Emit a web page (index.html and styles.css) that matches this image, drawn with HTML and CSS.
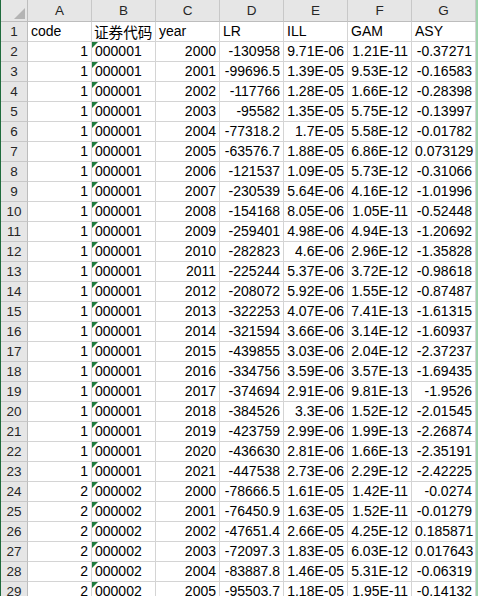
FILE: index.html
```html
<!DOCTYPE html>
<html>
<head>
<meta charset="utf-8">
<link rel="stylesheet" href="styles.css">
</head>
<body>
<div class="sheet">
  <div class="row head">
    <div class="rh corner"><span class="tri"></span></div>
    <div class="ch">A</div><div class="ch">B</div><div class="ch">C</div><div class="ch">D</div><div class="ch">E</div><div class="ch">F</div><div class="ch">G</div>
  </div>
  <div class="row"><div class="rh">1</div><div class="c">code</div><div class="c cjk">证券代码</div><div class="c">year</div><div class="c">LR</div><div class="c">ILL</div><div class="c">GAM</div><div class="c">ASY</div></div>
  <div class="row"><div class="rh">2</div><div class="c n">1</div><div class="c t">000001</div><div class="c n">2000</div><div class="c n">-130958</div><div class="c n">9.71E-06</div><div class="c n">1.21E-11</div><div class="c n">-0.37271</div></div>
  <div class="row"><div class="rh">3</div><div class="c n">1</div><div class="c t">000001</div><div class="c n">2001</div><div class="c n">-99696.5</div><div class="c n">1.39E-05</div><div class="c n">9.53E-12</div><div class="c n">-0.16583</div></div>
  <div class="row"><div class="rh">4</div><div class="c n">1</div><div class="c t">000001</div><div class="c n">2002</div><div class="c n">-117766</div><div class="c n">1.28E-05</div><div class="c n">1.66E-12</div><div class="c n">-0.28398</div></div>
  <div class="row"><div class="rh">5</div><div class="c n">1</div><div class="c t">000001</div><div class="c n">2003</div><div class="c n">-95582</div><div class="c n">1.35E-05</div><div class="c n">5.75E-12</div><div class="c n">-0.13997</div></div>
  <div class="row"><div class="rh">6</div><div class="c n">1</div><div class="c t">000001</div><div class="c n">2004</div><div class="c n">-77318.2</div><div class="c n">1.7E-05</div><div class="c n">5.58E-12</div><div class="c n">-0.01782</div></div>
  <div class="row"><div class="rh">7</div><div class="c n">1</div><div class="c t">000001</div><div class="c n">2005</div><div class="c n">-63576.7</div><div class="c n">1.88E-05</div><div class="c n">6.86E-12</div><div class="c n">0.073129</div></div>
  <div class="row"><div class="rh">8</div><div class="c n">1</div><div class="c t">000001</div><div class="c n">2006</div><div class="c n">-121537</div><div class="c n">1.09E-05</div><div class="c n">5.73E-12</div><div class="c n">-0.31066</div></div>
  <div class="row"><div class="rh">9</div><div class="c n">1</div><div class="c t">000001</div><div class="c n">2007</div><div class="c n">-230539</div><div class="c n">5.64E-06</div><div class="c n">4.16E-12</div><div class="c n">-1.01996</div></div>
  <div class="row"><div class="rh">10</div><div class="c n">1</div><div class="c t">000001</div><div class="c n">2008</div><div class="c n">-154168</div><div class="c n">8.05E-06</div><div class="c n">1.05E-11</div><div class="c n">-0.52448</div></div>
  <div class="row"><div class="rh">11</div><div class="c n">1</div><div class="c t">000001</div><div class="c n">2009</div><div class="c n">-259401</div><div class="c n">4.98E-06</div><div class="c n">4.94E-13</div><div class="c n">-1.20692</div></div>
  <div class="row"><div class="rh">12</div><div class="c n">1</div><div class="c t">000001</div><div class="c n">2010</div><div class="c n">-282823</div><div class="c n">4.6E-06</div><div class="c n">2.96E-12</div><div class="c n">-1.35828</div></div>
  <div class="row"><div class="rh">13</div><div class="c n">1</div><div class="c t">000001</div><div class="c n">2011</div><div class="c n">-225244</div><div class="c n">5.37E-06</div><div class="c n">3.72E-12</div><div class="c n">-0.98618</div></div>
  <div class="row"><div class="rh">14</div><div class="c n">1</div><div class="c t">000001</div><div class="c n">2012</div><div class="c n">-208072</div><div class="c n">5.92E-06</div><div class="c n">1.55E-12</div><div class="c n">-0.87487</div></div>
  <div class="row"><div class="rh">15</div><div class="c n">1</div><div class="c t">000001</div><div class="c n">2013</div><div class="c n">-322253</div><div class="c n">4.07E-06</div><div class="c n">7.41E-13</div><div class="c n">-1.61315</div></div>
  <div class="row"><div class="rh">16</div><div class="c n">1</div><div class="c t">000001</div><div class="c n">2014</div><div class="c n">-321594</div><div class="c n">3.66E-06</div><div class="c n">3.14E-12</div><div class="c n">-1.60937</div></div>
  <div class="row"><div class="rh">17</div><div class="c n">1</div><div class="c t">000001</div><div class="c n">2015</div><div class="c n">-439855</div><div class="c n">3.03E-06</div><div class="c n">2.04E-12</div><div class="c n">-2.37237</div></div>
  <div class="row"><div class="rh">18</div><div class="c n">1</div><div class="c t">000001</div><div class="c n">2016</div><div class="c n">-334756</div><div class="c n">3.59E-06</div><div class="c n">3.57E-13</div><div class="c n">-1.69435</div></div>
  <div class="row"><div class="rh">19</div><div class="c n">1</div><div class="c t">000001</div><div class="c n">2017</div><div class="c n">-374694</div><div class="c n">2.91E-06</div><div class="c n">9.81E-13</div><div class="c n">-1.9526</div></div>
  <div class="row"><div class="rh">20</div><div class="c n">1</div><div class="c t">000001</div><div class="c n">2018</div><div class="c n">-384526</div><div class="c n">3.3E-06</div><div class="c n">1.52E-12</div><div class="c n">-2.01545</div></div>
  <div class="row"><div class="rh">21</div><div class="c n">1</div><div class="c t">000001</div><div class="c n">2019</div><div class="c n">-423759</div><div class="c n">2.99E-06</div><div class="c n">1.99E-13</div><div class="c n">-2.26874</div></div>
  <div class="row"><div class="rh">22</div><div class="c n">1</div><div class="c t">000001</div><div class="c n">2020</div><div class="c n">-436630</div><div class="c n">2.81E-06</div><div class="c n">1.66E-13</div><div class="c n">-2.35191</div></div>
  <div class="row"><div class="rh">23</div><div class="c n">1</div><div class="c t">000001</div><div class="c n">2021</div><div class="c n">-447538</div><div class="c n">2.73E-06</div><div class="c n">2.29E-12</div><div class="c n">-2.42225</div></div>
  <div class="row"><div class="rh">24</div><div class="c n">2</div><div class="c t">000002</div><div class="c n">2000</div><div class="c n">-78666.5</div><div class="c n">1.61E-05</div><div class="c n">1.42E-11</div><div class="c n">-0.0274</div></div>
  <div class="row"><div class="rh">25</div><div class="c n">2</div><div class="c t">000002</div><div class="c n">2001</div><div class="c n">-76450.9</div><div class="c n">1.63E-05</div><div class="c n">1.52E-11</div><div class="c n">-0.01279</div></div>
  <div class="row"><div class="rh">26</div><div class="c n">2</div><div class="c t">000002</div><div class="c n">2002</div><div class="c n">-47651.4</div><div class="c n">2.66E-05</div><div class="c n">4.25E-12</div><div class="c n">0.185871</div></div>
  <div class="row"><div class="rh">27</div><div class="c n">2</div><div class="c t">000002</div><div class="c n">2003</div><div class="c n">-72097.3</div><div class="c n">1.83E-05</div><div class="c n">6.03E-12</div><div class="c n">0.017643</div></div>
  <div class="row"><div class="rh">28</div><div class="c n">2</div><div class="c t">000002</div><div class="c n">2004</div><div class="c n">-83887.8</div><div class="c n">1.46E-05</div><div class="c n">5.31E-12</div><div class="c n">-0.06319</div></div>
  <div class="row"><div class="rh">29</div><div class="c n">2</div><div class="c t">000002</div><div class="c n">2005</div><div class="c n">-95503.7</div><div class="c n">1.18E-05</div><div class="c n">1.95E-11</div><div class="c n">-0.14132</div></div>
</div>
</body>
</html>
```

FILE: styles.css
```css
html, body {
  margin: 0;
  padding: 0;
  background: #ffffff;
  overflow: hidden;
}
.sheet {
  width: 478px;
  height: 596px;
  box-sizing: border-box;
  border-left: 1px solid #1f6b3d;
  border-right: 2px solid #9fd3ad;
  overflow: hidden;
  font-family: "Liberation Sans", "Noto Sans CJK SC", sans-serif;
  font-size: 14px;
  color: #000;
}
.row {
  display: flex;
  height: 20px;
}
.row.head {
  height: 22px;
}
.rh {
  width: 27px;
  flex: none;
  box-sizing: border-box;
  background: #e6e6e6;
  border-right: 1px solid #bdbdbd;
  border-bottom: 1px solid #c8c8c8;
  text-align: center;
  font-size: 13.5px;
  line-height: 20px;
  color: #262626;
}
.corner {
  position: relative;
  border-bottom-color: #bdbdbd;
}
.tri {
  position: absolute;
  right: 2px;
  bottom: 2px;
  width: 0;
  height: 0;
  border-bottom: 11px solid #b4b4b4;
  border-left: 11px solid transparent;
}
.ch {
  width: 64px;
  flex: none;
  box-sizing: border-box;
  background: #e6e6e6;
  border-right: 1px solid #c8c8c8;
  border-bottom: 1px solid #bdbdbd;
  text-align: center;
  font-size: 13.5px;
  line-height: 22px;
  color: #262626;
}
.c {
  width: 64px;
  flex: none;
  box-sizing: border-box;
  border-right: 1px solid #d4d4d4;
  border-bottom: 1px solid #d4d4d4;
  padding: 0 3px;
  line-height: 19px;
  white-space: nowrap;
  overflow: hidden;
  position: relative;
}
.n {
  text-align: right;
}
.cjk {
  font-family: "Noto Sans CJK SC", sans-serif;
  font-size: 14.6px;
  padding: 0 2px;
  overflow: visible;
}
.t::before {
  content: "";
  position: absolute;
  left: 0;
  top: 0;
  width: 0;
  height: 0;
  border-top: 6px solid #1e7b3c;
  border-right: 6px solid transparent;
}
```
